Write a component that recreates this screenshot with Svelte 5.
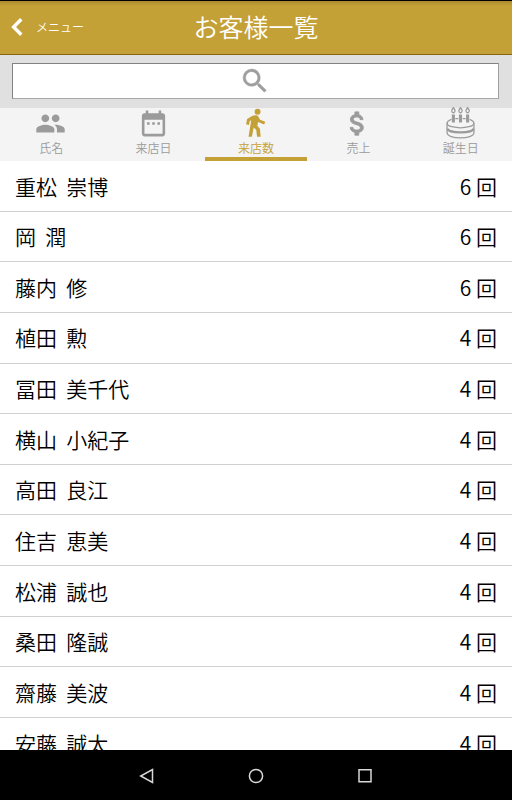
<script>
	const tabs = [
		{ key: 'name', label: '氏名' },
		{ key: 'date', label: '来店日' },
		{ key: 'visits', label: '来店数' },
		{ key: 'sales', label: '売上' },
		{ key: 'birthday', label: '誕生日' }
	];

	const customers = [
		{ last: '重松', first: '崇博', visits: 6 },
		{ last: '岡', first: '潤', visits: 6 },
		{ last: '藤内', first: '修', visits: 6 },
		{ last: '植田', first: '勲', visits: 4 },
		{ last: '冨田', first: '美千代', visits: 4 },
		{ last: '横山', first: '小紀子', visits: 4 },
		{ last: '高田', first: '良江', visits: 4 },
		{ last: '住吉', first: '恵美', visits: 4 },
		{ last: '松浦', first: '誠也', visits: 4 },
		{ last: '桑田', first: '隆誠', visits: 4 },
		{ last: '齋藤', first: '美波', visits: 4 },
		{ last: '安藤', first: '誠太', visits: 4 }
	];

	let current = $state('visits');
</script>

<div class="screen">
	<header class="header">
		<button class="back" type="button">
			<svg width="12" height="18" viewBox="0 0 12 18">
				<path d="M10.3 1.3L2.6 9l7.7 7.7" fill="none" stroke="currentColor" stroke-width="3.4" />
			</svg>
			<span>メニュー</span>
		</button>
		<h1>お客様一覧</h1>
	</header>

	<div class="search-bar">
		<button class="search" type="button" aria-label="検索">
			<svg width="32" height="32" viewBox="0 0 24 24">
				<path d="M15.5 14h-.79l-.28-.27A6.47 6.47 0 0 0 16 9.5 6.5 6.5 0 1 0 9.5 16c1.61 0 3.09-.59 4.23-1.57l.27.28v.79l5 4.99L20.49 19l-4.99-5zm-6 0C7.01 14 5 11.99 5 9.5S7.01 5 9.5 5 14 7.01 14 9.5 11.99 14 9.5 14z" stroke="currentColor" stroke-width="0.3" />
			</svg>
		</button>
	</div>

	<nav class="tabs">
		{#each tabs as tab}
			<button class="tab" class:active={current === tab.key} type="button" onclick={() => (current = tab.key)}>
				<svg class="tab-icon" viewBox="0 0 24 24">
					{#if tab.key === 'name'}
						<path d="M16 11c1.66 0 2.99-1.34 2.99-3S17.66 5 16 5s-3 1.34-3 3 1.34 3 3 3zm-8 0c1.66 0 2.99-1.34 2.99-3S9.66 5 8 5 5 6.34 5 8s1.34 3 3 3zm0 2c-2.33 0-7 1.17-7 3.5V19h14v-2.5c0-2.33-4.67-3.5-7-3.5zm8 0c-.29 0-.62.02-.97.05 1.16.84 1.97 1.97 1.97 3.45V19h6v-2.5c0-2.33-4.67-3.5-7-3.5z" />
					{:else if tab.key === 'date'}
						<path d="M9 11H7v2h2v-2zm4 0h-2v2h2v-2zm4 0h-2v2h2v-2zm2-7h-1V2h-2v2H8V2H6v2H5c-1.11 0-2 .9-2 2v14c0 1.1.89 2 2 2h14c1.1 0 2-.9 2-2V6c0-1.1-.9-2-2-2zm0 16H5V9h14v11z" />
					{:else if tab.key === 'visits'}
						<circle cx="13.6" cy="2.9" r="2.3" />
						<path d="M9.3 6.2C10 5.8 11 5.6 12 5.6c1.2 0 1.9.5 2.500 1.500l1 1.900 4 1.700-.8 2.100-4.700-1.900-.6 2.900 2 2.300.6 6.200h-2.800l-.6-5.200-2-2-1.400 7.200H6.600l2.100-12.800-1.200.7-.6 2.900-2.200-.5.8-4.100z" />
					{:else if tab.key === 'sales'}
						<path d="M11.8 10.9c-2.27-.59-3-1.2-3-2.15 0-1.09 1.01-1.85 2.7-1.85 1.78 0 2.44.85 2.5 2.1h2.21c-.07-1.72-1.12-3.3-3.21-3.81V3h-3v2.16c-1.94.42-3.5 1.68-3.5 3.61 0 2.31 1.91 3.46 4.7 4.13 2.5.6 3 1.48 3 2.41 0 .69-.49 1.79-2.7 1.79-2.06 0-2.87-.92-2.98-2.1h-2.2c.12 2.19 1.76 3.42 3.68 3.83V21h3v-2.15c1.95-.37 3.5-1.5 3.5-3.55 0-2.84-2.43-3.81-4.7-4.4z" stroke="currentColor" stroke-width="0.7" />
					{:else}
						<g fill="none" stroke="currentColor" stroke-width="1">
							<path d="M5 8.8c-4.400 1.500-4.500 4.500.3 5.700 4 1 9.400 1 13.400 0 4.800-1.200 4.700-4.200.3-5.700M8 8.200h2.300M13.700 8.200H16" />
							<path d="M1.600 11.700v7.500c0 5.200 20.800 5.200 20.800 0v-7.500" />
							<path d="M1.800 16c1 3.800 19.400 3.800 20.400 0" stroke-width="1.800" />
							<path d="M6.500 3.800c-2.100-1-1.300-2.500 0-4 1.300 1.500 2.100 3 0 4zM12 3.800c-2.100-1-1.300-2.500 0-4 1.300 1.500 2.100 3 0 4zM17.500 3.800c-2.100-1-1.300-2.500 0-4 1.300 1.500 2.100 3 0 4z" />
						</g>
						<path d="M5.300 5h2.400v6.300H5.300zM10.800 5h2.400v6.300h-2.400zM16.300 5h2.400v6.300h-2.400z" />
					{/if}
				</svg>
				<span class="tab-label">{tab.label}</span>
			</button>
		{/each}
	</nav>

	<ul class="list">
		{#each customers as customer}
			<li class="row">
				<span>{customer.last}&nbsp;&nbsp;{customer.first}</span>
				<span>{customer.visits} 回</span>
			</li>
		{/each}
	</ul>

	<footer class="system-bar">
		<svg width="16" height="18" viewBox="0 0 16 18"><path d="M13.5 2.5v13L1.7 9z" /></svg>
		<svg width="16" height="18" viewBox="0 0 16 18"><circle cx="8" cy="9" r="6.6" /></svg>
		<svg width="16" height="18" viewBox="0 0 16 18"><path d="M2 2.7h12v12H2z" /></svg>
	</footer>
</div>

<style>
	:global(body) {
		margin: 0;
		overflow: hidden;
	}

	.screen {
		width: 512px;
		height: 800px;
		display: flex;
		flex-direction: column;
		background: #ffffff;
		color: #000000;
		font-family: 'Noto Sans CJK JP', sans-serif;
		font-weight: 350;
		overflow: hidden;
	}

	button {
		border: 0;
		padding: 0;
		background: none;
		font: inherit;
		color: inherit;
	}

	svg {
		display: block;
		fill: currentColor;
	}

	.header {
		height: 55px;
		flex-shrink: 0;
		box-sizing: border-box;
		display: grid;
		grid-template-columns: 1fr auto 1fr;
		align-items: center;
		padding-bottom: 2px;
		border-top: 1px solid #000000;
		border-bottom: 1px solid #856510;
		background: linear-gradient(#a98a31, #c4a137 5px);
		color: #ffffff;
	}

	.back {
		display: flex;
		align-items: center;
		gap: 13px;
		padding-left: 11px;
		font-size: 12px;
	}

	h1 {
		margin: 0;
		padding-bottom: 2px;
		font-size: 25px;
		font-weight: 350;
		line-height: 36px;
	}

	.search-bar {
		height: 53px;
		flex-shrink: 0;
		box-sizing: border-box;
		padding: 8px 13px 9px 12px;
		background: #e0e0e0;
	}

	.search {
		width: 100%;
		height: 36px;
		display: flex;
		align-items: center;
		justify-content: center;
		padding-right: 2px;
		border: 1px solid #828282;
		border-right-color: #a0a0a0;
		border-bottom-color: #a8a8a8;
		background: #ffffff;
		color: #9e9e9e;
	}

	.tabs {
		height: 53px;
		flex-shrink: 0;
		display: grid;
		grid-template-columns: repeat(5, 1fr);
		background: #f4f4f4;
	}

	.tab {
		display: flex;
		flex-direction: column;
		align-items: center;
		box-sizing: border-box;
		border-bottom: 4px solid transparent;
		color: #9b9b9b;
	}

	.tab.active {
		border-color: #c4a137;
		color: #c4a137;
	}

	.tab-icon {
		width: 31px;
		height: 31px;
		margin-right: 1px;
		overflow: visible;
	}

	.tab-label {
		font-size: 12px;
		line-height: 18px;
	}

	.list {
		flex: 1;
		min-height: 0;
		margin: 0;
		padding: 0;
		list-style: none;
		overflow: hidden;
	}

	.row {
		height: 50.65px;
		box-sizing: border-box;
		display: flex;
		align-items: center;
		justify-content: space-between;
		padding: 0 15px 0.6px;
		border-bottom: 1px solid #d0d0d0;
		font-size: 21px;
		line-height: 30px;
	}

	.system-bar {
		height: 50px;
		flex-shrink: 0;
		box-sizing: border-box;
		display: flex;
		align-items: center;
		justify-content: center;
		gap: 93px;
		padding-top: 2px;
		background: #000000;
		color: #d8d8d8;
	}

	.system-bar svg {
		fill: none;
		stroke: currentColor;
		stroke-width: 1.5;
	}
</style>
